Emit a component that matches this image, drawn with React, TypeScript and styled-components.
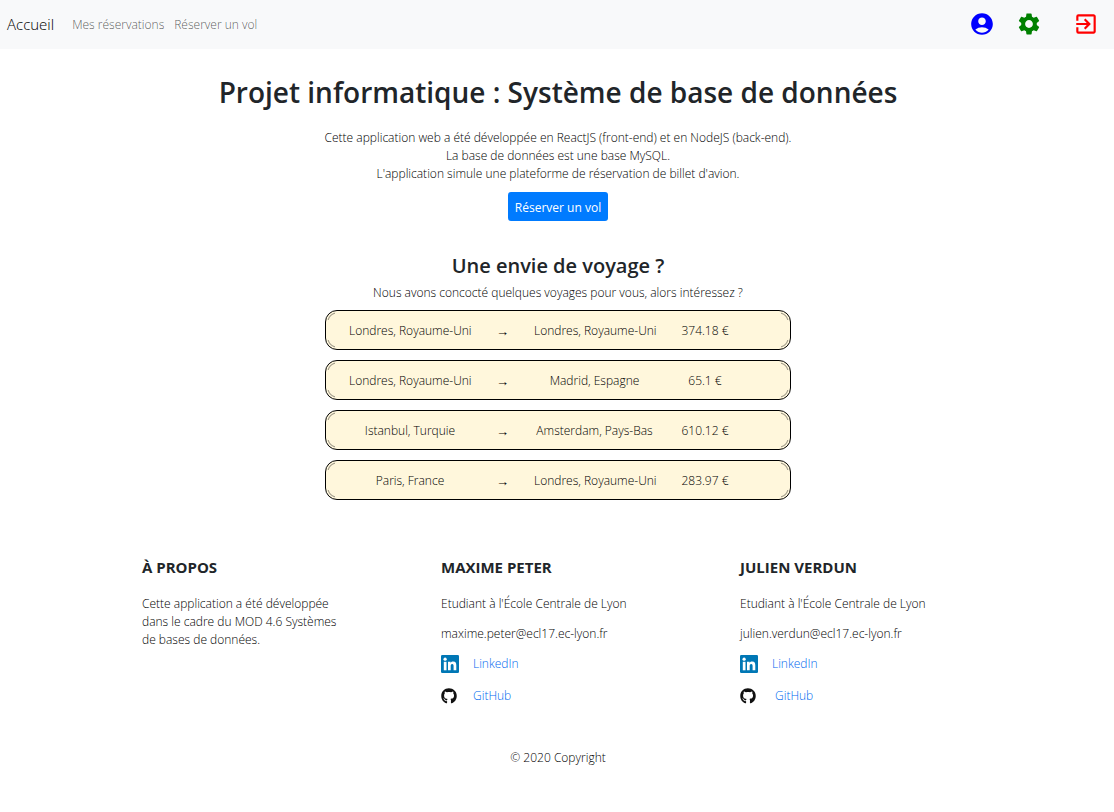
import React from "react";
import styled, { createGlobalStyle } from "styled-components";
import { MdAccountCircle, MdSettings, MdExitToApp } from "react-icons/md";
import { FaGithub } from "react-icons/fa";

const GlobalStyle = createGlobalStyle`
  *, *::before, *::after { box-sizing: border-box; }
  body {
    margin: 0;
    background: #fff;
    color: #000;
    font-family: "Segoe UI", "Open Sans", sans-serif;
    font-size: 12px;
    font-weight: 300;
    line-height: 18px;
  }
  h1, h2, h3, p { margin: 0; }
  h1, h2, h3 { color: #212529; }
  a { color: #0069f0; text-decoration: none; }
`;

const Navbar = styled.nav`
  display: flex;
  align-items: center;
  height: 49px;
  padding: 0 15px 1px 7px;
  background: #f8f9fa;
`;

const Brand = styled.a`
  margin-right: 18px;
  color: #000;
  font-size: 15px;
`;

const NavLinks = styled.div`
  display: flex;
  gap: 10px;
  padding-top: 2px;
`;

const NavLink = styled.a`
  color: rgba(0, 0, 0, 0.65);
`;

const NavIcons = styled.div`
  display: flex;
  gap: 21px;
  margin-left: auto;
`;

const IconLink = styled.a<{ $color: string; $spaced?: boolean }>`
  display: flex;
  margin-left: ${(p) => (p.$spaced ? "10px" : "0")};
  color: ${(p) => p.$color};
  font-size: 26px;
`;

const Main = styled.main`
  display: flex;
  flex-direction: column;
  align-items: center;
  padding: 24px 0 0 2px;
  text-align: center;
`;

const Title = styled.h1`
  margin-bottom: 18px;
  font-size: 28px;
  font-weight: 600;
  line-height: 38px;
`;

const PrimaryButton = styled.button`
  height: 29px;
  margin: 9px 0 32px;
  padding: 2px 7px 0;
  border: 0;
  border-radius: 3px;
  background: #007bff;
  color: #fff;
  font: inherit;
  font-weight: 400;
`;

const Subtitle = styled.h2`
  margin-bottom: 6px;
  font-size: 20px;
  font-weight: 600;
  line-height: 25px;
`;

const TripList = styled.ul`
  display: flex;
  flex-direction: column;
  gap: 10px;
  width: 466px;
  max-width: 100%;
  margin: 8px 0 0;
  padding: 0;
  list-style: none;
`;

const cornerArc = (x: string, y: string) =>
  `radial-gradient(circle at ${x} ${y}, transparent 8px, rgba(0, 0, 0, 0.4) 9px, transparent 10px)`;

const Trip = styled.li`
  display: grid;
  grid-template-columns: 122px 63px 121px 100px;
  align-items: center;
  height: 40px;
  padding: 1px 0 0 23px;
  border: 1px solid #000;
  border-radius: 12px;
  background:
    ${cornerArc("11px", "11px")} left top / 9px 9px no-repeat,
    ${cornerArc("-2px", "11px")} right top / 9px 9px no-repeat,
    ${cornerArc("11px", "-2px")} left bottom / 9px 9px no-repeat,
    ${cornerArc("-2px", "-2px")} right bottom / 9px 9px no-repeat,
    #fff7dc;
  white-space: nowrap;
`;

const Arrow = styled.span`
  font-size: 13px;
  font-weight: 400;
`;

const Footer = styled.footer`
  padding: 59px 0 44px;
`;

const Columns = styled.div`
  display: grid;
  grid-template-columns: repeat(3, 1fr);
  gap: 100px;
  margin: 0 175px 0 142px;
`;

const ColumnTitle = styled.h3`
  margin-bottom: 20px;
  font-size: 15px;
  font-weight: 700;
  line-height: 16px;
  text-transform: uppercase;
`;

const Line = styled.p`
  margin-bottom: 12px;
`;

const Social = styled.a<{ $gap: number }>`
  display: flex;
  align-items: center;
  gap: ${(p) => p.$gap}px;
  margin-bottom: 14px;
`;

const GithubIcon = styled(FaGithub)`
  color: #111;
  font-size: 16px;
`;

const Copyright = styled.p`
  padding: 30px 0 0 2px;
  text-align: center;
`;

const LinkedinIcon = () => (
  <svg width="18" height="18" viewBox="0 0 18 18" aria-hidden="true">
    <rect width="18" height="18" rx="1.3" fill="#0077b5" />
    <g fill="#fff">
      <circle cx="4.1" cy="4.2" r="1.6" />
      <rect x="2.8" y="6.8" width="2.7" height="8.5" />
      <path d="M7 6.8h2.6V8c.5-.9 1.4-1.4 2.6-1.4 2.5 0 3.1 1.6 3.1 4v4.7h-2.7v-4.2c0-1.1-.1-2.2-1.4-2.2s-1.5 1.1-1.5 2.2v4.2H7z" />
    </g>
  </svg>
);

const trips = [
  ["Londres, Royaume-Uni", "Londres, Royaume-Uni", "374.18 €"],
  ["Londres, Royaume-Uni", "Madrid, Espagne", "65.1 €"],
  ["Istanbul, Turquie", "Amsterdam, Pays-Bas", "610.12 €"],
  ["Paris, France", "Londres, Royaume-Uni", "283.97 €"],
];

const authors = [
  { name: "Maxime Peter", mail: "maxime.peter@ecl17.ec-lyon.fr", gap: 16 },
  { name: "Julien Verdun", mail: "julien.verdun@ecl17.ec-lyon.fr", gap: 19 },
];

export default function App() {
  return (
    <>
      <GlobalStyle />
      <Navbar>
        <Brand href="#">Accueil</Brand>
        <NavLinks>
          <NavLink href="#reservations">Mes réservations</NavLink>
          <NavLink href="#vol">Réserver un vol</NavLink>
        </NavLinks>
        <NavIcons>
          <IconLink href="#profil" aria-label="Profil" $color="blue"><MdAccountCircle /></IconLink>
          <IconLink href="#parametres" aria-label="Paramètres" $color="green"><MdSettings /></IconLink>
          <IconLink href="#deconnexion" aria-label="Déconnexion" $color="red" $spaced><MdExitToApp /></IconLink>
        </NavIcons>
      </Navbar>
      <Main>
        <Title>Projet informatique : Système de base de données</Title>
        <p>Cette application web a été développée en ReactJS (front-end) et en NodeJS (back-end).</p>
        <p>La base de données est une base MySQL.</p>
        <p>L'application simule une plateforme de réservation de billet d'avion.</p>
        <PrimaryButton type="button">Réserver un vol</PrimaryButton>
        <Subtitle>Une envie de voyage ?</Subtitle>
        <p>Nous avons concocté quelques voyages pour vous, alors intéressez ?</p>
        <TripList>
          {trips.map(([from, to, price]) => (
            <Trip key={price}>
              <span>{from}</span>
              <Arrow>→</Arrow>
              <span>{to}</span>
              <span>{price}</span>
            </Trip>
          ))}
        </TripList>
      </Main>
      <Footer>
        <Columns>
          <section>
            <ColumnTitle>À propos</ColumnTitle>
            <Line>Cette application a été développée dans le cadre du MOD 4.6 Systèmes de bases de données.</Line>
          </section>
          {authors.map((a) => (
            <section key={a.name}>
              <ColumnTitle>{a.name}</ColumnTitle>
              <Line>Etudiant à l'École Centrale de Lyon</Line>
              <Line>{a.mail}</Line>
              <Social href="#linkedin" $gap={14}><LinkedinIcon />LinkedIn</Social>
              <Social href="#github" $gap={a.gap}><GithubIcon />GitHub</Social>
            </section>
          ))}
        </Columns>
        <Copyright>© 2020 Copyright</Copyright>
      </Footer>
    </>
  );
}
